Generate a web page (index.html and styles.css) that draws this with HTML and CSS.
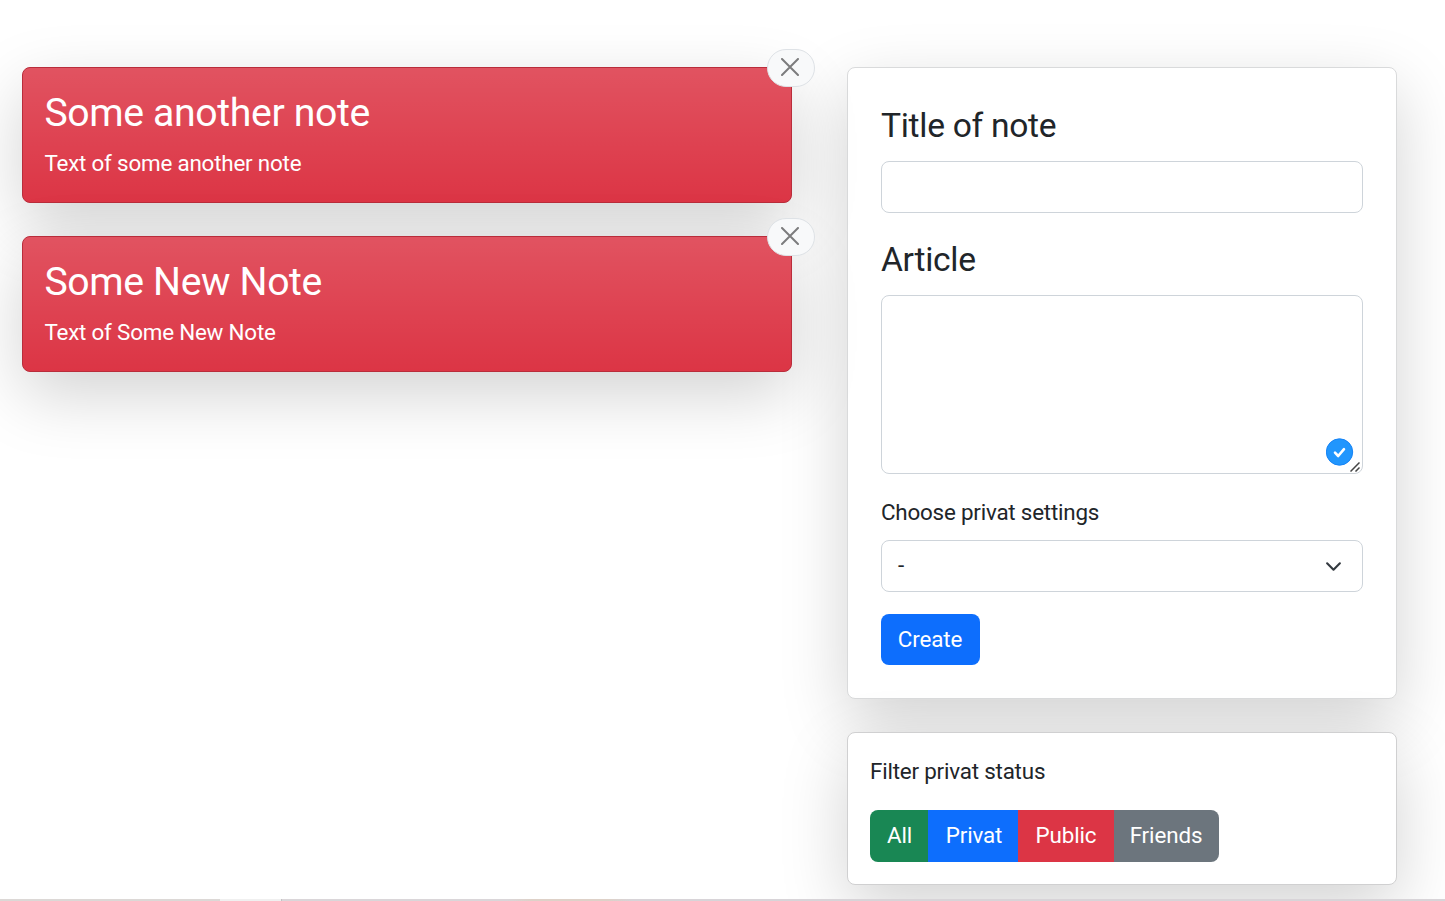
FILE: index.html
```html
<!DOCTYPE html>
<html lang="en">
<head>
<meta charset="utf-8">
<title>Notes</title>
<link rel="stylesheet" href="styles.css">
</head>
<body>
<main class="layout">
  <section class="notes">
    <article class="note">
      <h3 class="note-title">Some another note</h3>
      <p class="note-text">Text of some another note</p>
      <button class="note-close" aria-label="Close"><svg viewBox="0 0 18 18"><path d="M1 1 17 17M17 1 1 17"/></svg></button>
    </article>
    <article class="note">
      <h3 class="note-title">Some New Note</h3>
      <p class="note-text">Text of Some New Note</p>
      <button class="note-close" aria-label="Close"><svg viewBox="0 0 18 18"><path d="M1 1 17 17M17 1 1 17"/></svg></button>
    </article>
  </section>
  <aside class="side">
    <form class="card form-card">
      <label class="heading" for="title">Title of note</label>
      <input class="control title-input" id="title" type="text">
      <label class="heading" for="article">Article</label>
      <div class="area-wrap">
        <textarea class="control area" id="article"></textarea>
        <svg class="grip" viewBox="0 0 10 10"><path d="M.5 9.5 9.500.5M5.500 9.500 9.500 5.500"/></svg>
        <svg class="check" viewBox="0 0 28 28"><circle cx="13.500" cy="14" r="13.200"/><path d="M9 14.700 12.200 18 18 11.200"/></svg>
      </div>
      <p class="label">Choose privat settings</p>
      <div class="control select"><span>-</span><svg class="chevron" viewBox="0 0 16 16"><path d="m2 5 6 6 6-6"/></svg></div>
      <button class="create" type="button">Create</button>
    </form>
    <section class="card filter-card">
      <p class="filter-label">Filter privat status</p>
      <div class="group">
        <button class="btn all">All</button>
        <button class="btn privat">Privat</button>
        <button class="btn public">Public</button>
        <button class="btn friends">Friends</button>
      </div>
    </section>
  </aside>
</main>
<footer class="edge"><i class="edge-left"></i><i class="edge-tab"></i><i class="edge-rest"></i></footer>
</body>
</html>
```

FILE: styles.css
```css
* { box-sizing: border-box; }
html, body { height: 100%; }
body {
  margin: 0;
  display: flex;
  flex-direction: column;
  overflow: hidden;
  background: #fff;
  color: #212529;
  font: 400 22.4px/33.600px Roboto, sans-serif;
}
h3, p { margin: 0; font-weight: 400; }
button { font: inherit; color: #fff; padding: 0; border: 0; }
.layout {
  flex: 1;
  min-height: 0;
  display: grid;
  grid-template-columns: 770px 550px;
  column-gap: 55px;
  padding: 67px 0 0 22px;
  align-items: start;
}
.notes { display: grid; gap: 33px; }
.note {
  position: relative;
  height: 136px;
  padding: 22px 22px 0 21.400px;
  border: 1px solid #b92d3b;
  border-radius: 8px;
  color: #fff;
  background: #dc3545 linear-gradient(180deg, rgba(255,255,255,.15), rgba(255,255,255,0));
  box-shadow: 0 22.4px 67.200px rgba(0,0,0,.175);
}
.note-title { font-size: 39.200px; line-height: 47px; margin-bottom: 10px; letter-spacing: -.36px; }
.note-text { letter-spacing: -.2px; }
.note-close {
  position: absolute;
  top: -19px;
  right: -24px;
  width: 48px;
  height: 38px;
  display: flex;
  align-items: center;
  justify-content: center;
  padding: 0 2px 2px 0;
  border: 1px solid #dee2e6;
  border-radius: 19px;
  background: #f8f9fa;
}
.note-close svg { width: 18px; height: 18px; fill: none; stroke: #7c7c7d; stroke-width: 2; stroke-linecap: round; }
.side { display: grid; gap: 33px; }
.card {
  border: 1px solid #d9dadb;
  border-radius: 8px;
  background: #fff;
  box-shadow: 0 22.4px 67.200px rgba(0,0,0,.175);
}
.form-card { height: 632px; padding: 37px 33px 0; display: flex; flex-direction: column; }
.heading { font-size: 33.600px; line-height: 42px; margin-bottom: 14px; letter-spacing: -.3px; }
.control {
  width: 100%;
  height: 52px;
  border: 1px solid #ced4da;
  border-radius: 8px;
  background: #fff;
  outline: 0;
}
.title-input { margin-bottom: 26px; }
.area-wrap { position: relative; height: 179px; margin-bottom: 22px; }
.area { display: block; height: 179px; resize: none; }
.grip { position: absolute; right: 3px; bottom: 2px; width: 10px; height: 10px; fill: none; stroke: #444; stroke-width: 1.500; }
.check { position: absolute; right: 9px; bottom: 8px; width: 28px; height: 28px; fill: #2196fd; stroke: #1683f5; stroke-width: 1; }
.check path { fill: none; stroke: #fff; stroke-width: 2.600; stroke-linecap: round; stroke-linejoin: round; }
.label { margin-bottom: 10px; letter-spacing: -.21px; }
.select { display: flex; align-items: center; justify-content: space-between; padding: 0 20px 0 16px; margin-bottom: 22px; }
.chevron { width: 17px; height: 17px; margin-top: 1px; fill: none; stroke: #343a40; stroke-width: 2; stroke-linecap: round; stroke-linejoin: round; }
.create { width: 99px; height: 51px; padding: 1px 1px 0 0; border-radius: 8px; background: #0d6efd; letter-spacing: -.15px; }
.filter-card { height: 153px; padding: 22px; border-color: #d0d0d1; }
.filter-label { letter-spacing: -.2px; }
.group { display: flex; margin-top: 21px; width: 349px; height: 52px; border-radius: 8px; overflow: hidden; }
.btn { letter-spacing: -.12px; }
.all { width: 58px; padding-left: 1px; background: #198754; }
.privat { width: 90px; padding-left: 2px; background: #0d6efd; }
.public { width: 96px; background: #dc3545; }
.friends { width: 105px; padding-right: 1px; background: #6c757d; }
.edge { position: relative; flex: none; display: flex; height: 2px; }
.edge-left { width: 220px; background: #dcd8d6; }
.edge-tab { width: 62px; background: #f0f0f0; border-right: 1px solid #c4c2c4; }
.edge-rest { flex: 1; background: linear-gradient(90deg, #dad6d9 0 225px, #ded1c8 250px 325px, #d8d4d8 350px); }
```
